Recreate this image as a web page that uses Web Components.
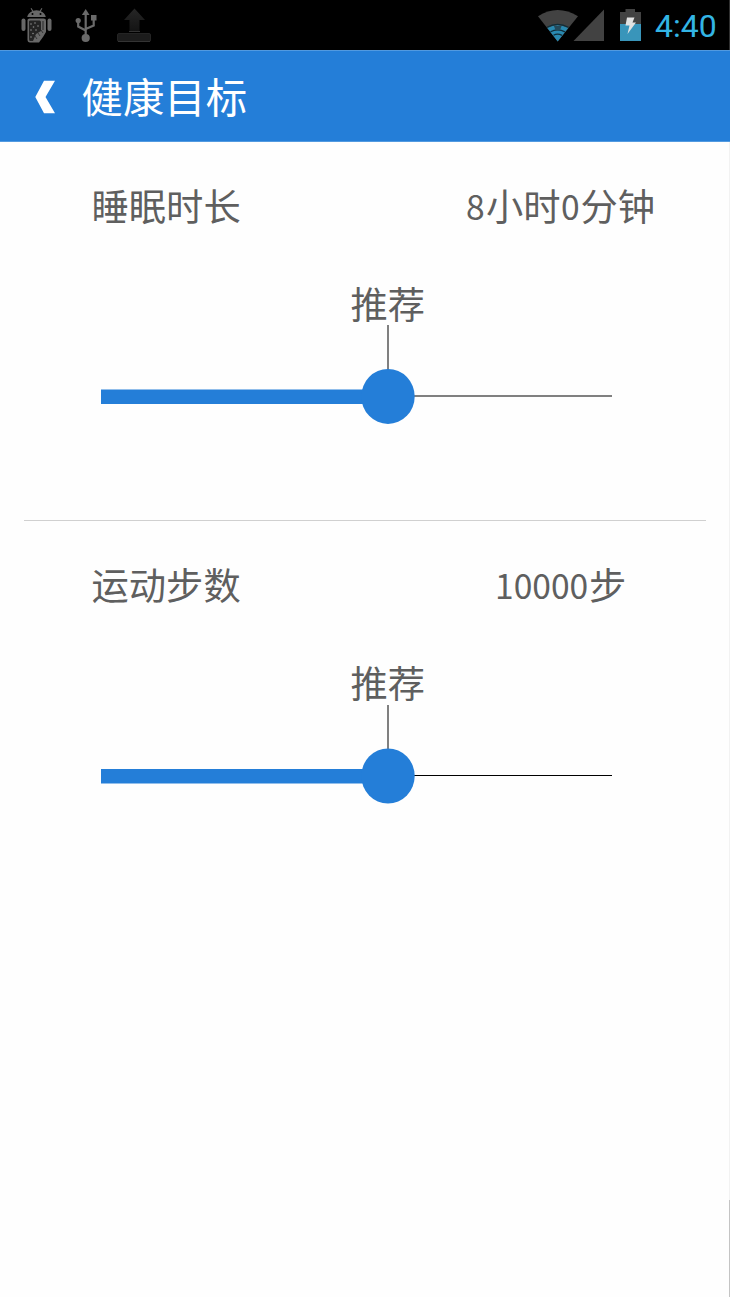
<!DOCTYPE html>
<html lang="zh-CN">
<head>
<meta charset="utf-8">
<title>健康目标</title>
<style>
html,body{margin:0;padding:0;background:#fefefe}
body{font-family:"Noto Sans CJK SC",sans-serif;color:#5f5f5f}
</style>
</head>
<body>
<health-app></health-app>
<script>
class Base extends HTMLElement{
  connectedCallback(){
    if(this.shadowRoot)return;
    this.attachShadow({mode:"open"}).innerHTML=this.render();
  }
}
customElements.define("status-bar",class extends Base{render(){return `
<style>
:host{display:flex;height:50px;background:#000;justify-content:space-between;box-sizing:border-box;border-right:1px solid #303030}
svg{display:block;flex:none}
.right{display:flex;align-items:center}
time{font:32px/50px Roboto,sans-serif;color:#33b5e5;width:74px;padding-top:1px;box-sizing:border-box;height:50px;white-space:nowrap}
</style>
<svg width="160" height="50" viewBox="0 0 160 50">
 <g fill="#686868">
  <path d="M27.2 17q1-4.4 5-5.8l-1.6-2.7.9-.4 1.7 2.6q3.300-.8 6.600 0l1.700-2.600.9.4-1.600 2.700q4 1.400 5 5.800z"/>
  <rect x="21.500" y="18.500" width="4" height="12.500" rx="2"/><rect x="47.500" y="18.500" width="4" height="12.500" rx="2"/>
  <path d="M27.500 20q0-1.500 2-1.500h14q2.500 0 2.500 2V32l-3 5-4 5.500h-9q-2.500 0-2.500-3z"/>
 </g>
 <path d="M29 21.500q0-1 1.500-1h9q1.500 0 1.500 2V31l-5 3-3 7h-3q-1 0-1-2z" fill="#242424"/>
 <path d="M43 21v9" stroke="#484848" stroke-width="2"/>
 <g fill="#8a8a8a"><circle cx="31" cy="24" r=".8"/><circle cx="35" cy="23" r=".8"/><circle cx="38" cy="26" r=".8"/><circle cx="33.500" cy="27" r=".8"/><circle cx="31" cy="30" r=".8"/><circle cx="36" cy="30" r=".8"/><circle cx="33" cy="33.500" r=".8"/><circle cx="31" cy="37" r=".8"/></g>
 <path d="M35 36l2 3m1-6l2 3m1-6l2 3" stroke="#333" stroke-width="1"/>
 <g fill="#000"><circle cx="32.500" cy="14" r="1"/><circle cx="40.500" cy="14" r="1"/></g>
 <g fill="none" stroke="#6a6a6a" stroke-width="2.200"><path d="M85.700 12v24M85.700 30.500l-7.500-4v-6M85.700 29l8-3.500v-7"/></g>
 <g fill="#6a6a6a"><path d="M85.700 9l3.800 6h-7.600z"/><circle cx="85.700" cy="38" r="4.100"/><circle cx="78.200" cy="20.500" r="2.600"/><rect x="91" y="15" width="5.500" height="5.500"/></g>
 <defs><linearGradient id="u" x2="0" y2="1"><stop stop-color="#262626"/><stop offset="1" stop-color="#141414"/></linearGradient></defs>
 <path d="M134.500 8.500l10.500 11.500h-5.500v11h-10V20H124z" fill="url(#u)"/><path d="M129 31.500h11" stroke="#333"/>
 <rect x="117.500" y="33.500" width="33" height="8" rx="1.500" fill="#1c1c1c" stroke="#242424"/><path d="M118 41.500h32" stroke="#343434"/>
</svg>
<div class="right">
<svg width="119" height="50" viewBox="536 0 119 50">
 <path d="M538 16.200Q557.500 3.800 578 16.200L557.700 41.500z" fill="#424242"/>
 <path d="M547.300 28Q557.500 22.500 568.200 28L557.700 41.500z" fill="#2989b0"/>
 <path d="M547 27.300Q557.500 21.500 568.500 27.300M550.500 31.800Q557.500 28 565 31.800M553.500 35.300Q557.500 33 562 35.300" fill="none" stroke="#102d39" stroke-width="1.300"/>
 <path d="M554 26h7.500l-1.500 4.500h-4.500z" fill="#24495a"/>
 <path d="M604 9.500V41h-30.500z" fill="#424242"/>
 <path d="M620 12h5.500V9h9.500v3h6v12h-21z" fill="#424242"/><path d="M620 24h21v17h-21z" fill="#3995ba"/>
 <path d="M627 17.500h7.500L632.500 22.500h3.500L627.500 34l2-8.500h-4z" fill="#e2e2e2"/>
</svg><time>4:40</time></div>`}});

customElements.define("title-bar",class extends Base{render(){return `
<style>
:host{display:flex;align-items:center;height:92px;box-sizing:border-box;background:#247ed8;border-top:1px solid #529ae0;border-bottom:1px solid #529ae0;padding-left:35px;color:#fff}
svg{display:block;margin-top:1px}
h1{margin:-3px 0 0 26.500px;font-size:41.4px;line-height:60px;font-weight:400;white-space:nowrap}
</style>
<svg width="20" height="34" viewBox="0 0 20 34"><path d="M9 .8h11L10.500 17 20 33.200H9L.3 17z" fill="#fff"/></svg>
<h1><slot></slot></h1>`}});

customElements.define("half-digits",class extends Base{render(){return `
<style>:host{display:inline-block;width:calc(var(--n)*18.65px);margin-right:1.3px}span{display:inline-block;transform:scale(.9,.92);transform-origin:0 62%}</style><span><slot></slot></span>`}});

customElements.define("goal-slider",class extends Base{render(){
 const thin=this.hasAttribute("thin");
 return `
<style>
:host{display:flex;flex-direction:column}
.rec{margin-left:350.500px;font-size:37.3px;line-height:${thin?46:48}px;height:46px;white-space:nowrap}
svg{display:block}
</style>
<div class="rec"><slot></slot></div>
<svg width="730" height="110" viewBox="0 0 730 110">
 <path d="M387 0h2v50h-2z" fill="#808080"/>
 ${thin?'<path d="M388 70h224v1H388z" fill="#000"/>':'<path d="M388 70h224v2H388z" fill="#808080"/>'}
 <path d="M101 ${thin?64:64.400}h287v14.500H101z" fill="#247ed8"/>
 <ellipse cx="388" cy="${thin?71:71.400}" rx="26.700" ry="27.500" fill="#247ed8"/>
</svg>`}});

customElements.define("goal-section",class extends Base{render(){return `
<style>
:host{display:block;height:379px;box-sizing:border-box;padding-top:35px}
header{display:grid;grid-template-columns:300px 1fr;padding-left:91.500px;font-size:37.3px;line-height:56px;height:56px}
header>*{white-space:nowrap}
.value{padding-left:var(--value-gap)}
.slider{padding-top:var(--slider-gap)}
</style>
<header><div><slot name="label"></slot></div><div class="value"><slot name="value"></slot></div></header>
<div class="slider"><slot></slot></div>`}});

customElements.define("health-app",class extends Base{render(){return `
<style>
:host{display:block;position:relative;width:730px;height:1297px;overflow:hidden;background:#fefefe}
hr{margin:-1px 24px 0;border:0;height:1px;background:#d0d0d0}
.one{--value-gap:74.500px;--slider-gap:46px}.two{--value-gap:103px;--slider-gap:47px}
.edge{position:absolute;right:0;top:142px;bottom:0;width:1px;background:linear-gradient(#f2f2f2 1058px,#c4c4c4 1058px)}
</style>
<status-bar></status-bar>
<title-bar>健康目标</title-bar>
<goal-section class="one"><span slot="label">睡眠时长</span><span slot="value"><half-digits style="--n:1">8</half-digits>小时<half-digits style="--n:1">0</half-digits>分钟</span><goal-slider>推荐</goal-slider></goal-section>
<hr>
<goal-section class="two"><span slot="label">运动步数</span><span slot="value"><half-digits style="--n:5">10000</half-digits>步</span><goal-slider thin>推荐</goal-slider></goal-section>
<div class="edge"></div>`}});
</script>
</body>
</html>
